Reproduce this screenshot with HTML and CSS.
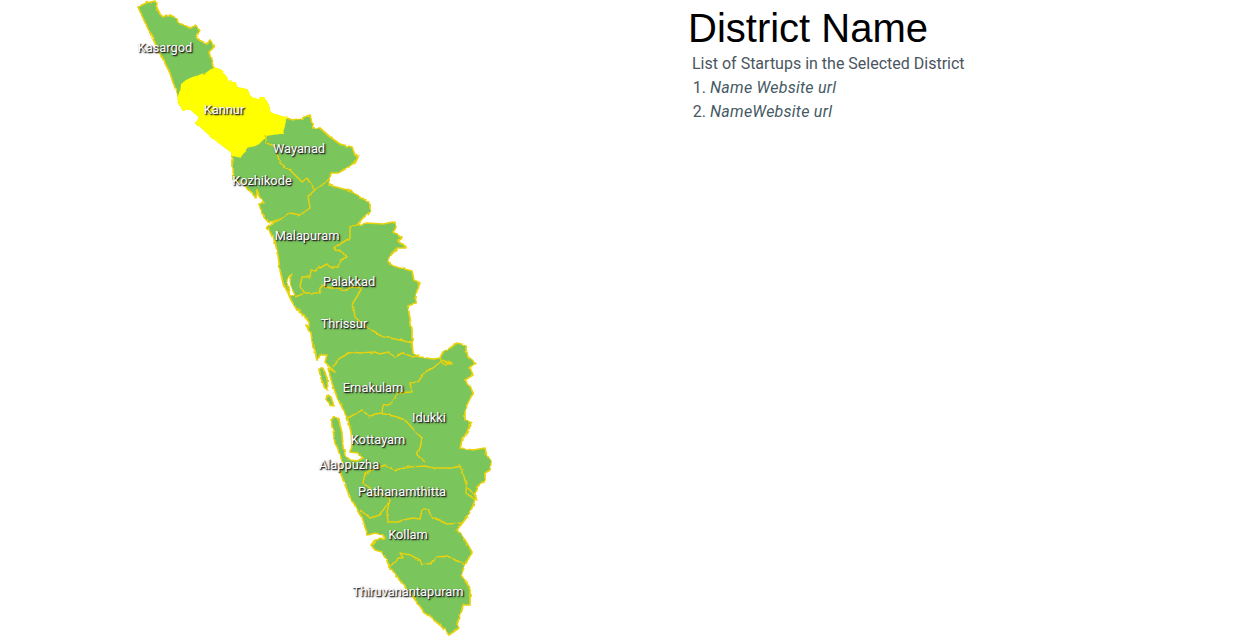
FILE: index.html
```html
<!DOCTYPE html>
<html lang="en">
<head>
<meta charset="utf-8">
<title>Kerala Startups</title>
<link rel="stylesheet" href="styles.css">
</head>
<body>
<div class="page">
  <div class="map">
    <svg class="map-svg" viewBox="0 0 625 641" width="625" height="641" aria-label="Map of Kerala">
      <defs>
        <filter id="rough" x="0" y="0" width="100%" height="100%" filterUnits="userSpaceOnUse" primitiveUnits="userSpaceOnUse">
          <feTurbulence type="fractalNoise" baseFrequency="0.14" numOctaves="2" seed="4" result="n"/>
          <feDisplacementMap in="SourceGraphic" in2="n" scale="3" xChannelSelector="R" yChannelSelector="G" result="d"/>
          <feGaussianBlur in="d" stdDeviation="0.3"/>
        </filter>
      </defs>
      <g class="rough">
      <path class="land" d="M138 7 L146 3 L155 1 L157 8 L160 14 L163 17 L167 15 L170 15 L174 17 L177 18 L178 23 L184 25 L188 27 L191 28 L195 25 L200 31 L196 37 L201 41 L207 44 L210 40 L214 47 L209 52 L211 60 L214 68 L220 70 L226 75 L227 82 L235 83 L237 88 L247 90 L250 97 L258 100 L264 98 L268 105 L270 113 L285 118 L293 120 L302 118 L310 115 L313 128 L320 128 L330 137 L340 144 L352 147 L355 155 L358 157 L355 163 L347 168 L338 173 L331 173 L329 185 L347 190 L357 195 L370 203 L370 212 L363 218 L357 225 L367 223 L383 224 L393 222 L396 227 L393 232 L402 238 L398 241 L406 248 L397 248 L390 255 L387 262 L393 266 L412 271 L414 280 L420 283 L417 290 L415 303 L408 305 L409 313 L412 330 L412 343 L413 353 L420 357 L433 359 L440 358 L443 352 L450 348 L457 343 L465 345 L468 357 L476 363 L470 368 L473 375 L465 380 L470 386 L473 393 L468 402 L465 410 L465 420 L472 423 L467 432 L462 440 L460 448 L473 450 L485 448 L487 457 L491 462 L490 470 L485 473 L485 480 L477 487 L475 500 L472 508 L467 517 L457 530 L465 540 L472 552 L465 565 L461 575 L470 588 L470 605 L463 605 L460 617 L457 623 L459 628 L449 635 L440 625 L425 613 L413 597 L401 582 L390 567 L382 552 L375 550 L371 545 L375 540 L385 539 L383 535 L375 533 L368 535 L365 527 L362 517 L356 507 L350 497 L343 480 L340 470 L343 463 L338 450 L335 443 L333 430 L331 420 L335 417 L339 420 L342 433 L343 447 L345 455 L350 460 L357 461 L363 458 L358 453 L350 452 L352 445 L351 432 L348 420 L342 407 L337 397 L332 383 L328 368 L335 372 L325 362 L327 355 L320 355 L317 361 L315 350 L313 347 L311 333 L306 325 L310 327 L309 322 L302 314 L297 310 L290 298 L288 293 L283 283 L280 270 L278 255 L275 242 L270 232 L267 227 L275 221 L268 222 L262 213 L259 204 L264 203 L260 197 L257 190 L256 198 L243 183 L233 180 L232 168 L232 152 L220 143 L207 132 L197 123 L200 117 L190 108 L183 110 L178 98 L170 73 L162 57 L152 37 L143 18 Z"/>
      <path class="land" d="M319 368 L323 368 L327 378 L328 390 L325 388 L321 378 Z"/>
      <path class="land" d="M327 395 L331 397 L334 406 L330 405 L326 400 Z"/>
      <path class="water" d="M292 274 L287 280 L288 287 L290 296 L295 295 L291 287 L290 281 Z"/>
      <path class="kannur" d="M178 98 L181 90 L182 83 L192 78 L207 73 L214 68 L220 70 L226 75 L227 82 L235 83 L237 88 L247 90 L250 97 L258 100 L264 98 L268 105 L270 113 L285 118 L285 123 L282 133 L267 135 L257 145 L247 147 L240 157 L232 155 L232 152 L220 143 L207 132 L197 123 L200 117 L190 108 L183 110 Z"/>
      <path class="border" d="M265 135 L267 143 L275 147 L280 163 L290 170 L296 176 L302 182 L307 178 L315 190 L322 185 L330 178"/>
      <path class="border" d="M315 190 L308 196 L310 208 L300 215 L290 213 L283 218 L275 222"/>
      <path class="border" d="M356 225 L350 227 L350 238 L335 247 L335 250 L343 252 L347 257 L340 260 L338 267 L330 267 L327 264 L320 268 L318 266 L316 271 L311 270 L310 277 L302 277 L300 287 L305 293 L295 297"/>
      <path class="border" d="M305 293 L320 293 L322 285 L330 288 L337 288 L345 290 L352 287 L362 288 L353 303 L355 317 L367 328 L383 337 L400 340 L412 343"/>
      <path class="border" d="M333 367 L337 362 L340 358 L352 352 L360 353 L375 352 L380 354 L388 352 L395 357 L403 353 L413 357 L420 355"/>
      <path class="border" d="M440 358 L443 364 L452 364 L443 360 L433 368 L425 372 L418 382 L410 383 L412 392 L397 393 L392 403 L383 405 L382 413"/>
      <path class="border" d="M348 418 L355 414 L362 410 L370 417 L375 414 L382 413 L388 415 L398 417 L407 422 L415 431 L422 438 L420 448 L417 455 L425 462"/>
      <path class="border" d="M365 473 L372 470 L385 465 L395 470 L410 467 L425 466 L433 468 L453 468 L460 466 L463 473 L467 487 L475 495 L477 501"/>
      <path class="border" d="M467 480 L466 493 L475 500"/>
      <path class="border" d="M365 473 L363 483 L370 488 L372 495 L383 493 L390 500 L380 515 L370 518 L360 510"/>
      <path class="border" d="M390 500 L387 512 L388 522 L398 522 L403 520 L413 518 L420 519 L422 510 L428 510 L432 517 L443 522 L447 524 L462 523 L467 517"/>
      <path class="border" d="M390 567 L398 558 L403 558 L400 553 L410 555 L420 560 L422 565 L432 563 L437 557 L447 556 L465 565"/>
      </g>
    </svg>
    <span class="label label-kasargod">Kasargod</span>
    <span class="label label-kannur">Kannur</span>
    <span class="label label-wayanad">Wayanad</span>
    <span class="label label-kozhikode">Kozhikode</span>
    <span class="label label-malapuram">Malapuram</span>
    <span class="label label-palakkad">Palakkad</span>
    <span class="label label-thrissur">Thrissur</span>
    <span class="label label-ernakulam">Ernakulam</span>
    <span class="label label-idukki">Idukki</span>
    <span class="label label-kottayam">Kottayam</span>
    <span class="label label-alappuzha">Alappuzha</span>
    <span class="label label-pathanamthitta">Pathanamthitta</span>
    <span class="label label-kollam">Kollam</span>
    <span class="label label-thiruvanantapuram">Thiruvanantapuram</span>
  </div>
  <main class="info">
    <h1 class="title">District Name</h1>
    <p class="intro">List of Startups in the Selected District</p>
    <ol class="startups">
      <li><em class="startup-name">Name Website url</em></li>
      <li><em class="startup-name">NameWebsite url</em></li>
    </ol>
  </main>
</div>
</body>
</html>
```
FILE: styles.css
```css
html, body {
  margin: 0;
  padding: 0;
  background: #fff;
  overflow: hidden;
}
.page {
  display: flex;
  width: 1249px;
  height: 641px;
  font-family: Roboto, sans-serif;
  font-size: 16px;
  line-height: 24px;
  color: #4a5560;
}
.map {
  position: relative;
  flex: 0 0 625px;
  height: 641px;
}
.map-svg {
  display: block;
}
.rough {
  filter: url(#rough);
}
.land {
  fill: #7ac55c;
  stroke: #e8d20f;
  stroke-width: 1.7;
  stroke-linejoin: round;
}
.water {
  fill: #fff;
  stroke: #e8d20f;
  stroke-width: 1.2;
  stroke-linejoin: round;
}
.kannur {
  fill: #ffff00;
  stroke: #ffff00;
  stroke-width: 1.7;
  stroke-linejoin: round;
}
.border {
  fill: none;
  stroke: #e8d20f;
  stroke-width: 1.5;
  stroke-linejoin: round;
}
.label {
  position: absolute;
  transform: translate(-50%, -50%);
  font-size: 12.8px;
  line-height: 16px;
  white-space: nowrap;
  color: #fff;
  text-shadow: 1px 1px 1px #222, 1px 1px 2px #333;
}
.label-kasargod { left: 165px; top: 48px; }
.label-kannur { left: 224px; top: 110px; }
.label-wayanad { left: 299px; top: 149px; }
.label-kozhikode { left: 262px; top: 181px; }
.label-malapuram { left: 307px; top: 236px; }
.label-palakkad { left: 349px; top: 282px; }
.label-thrissur { left: 344px; top: 324px; }
.label-ernakulam { left: 373px; top: 388px; }
.label-idukki { left: 429px; top: 418px; }
.label-kottayam { left: 378px; top: 440px; }
.label-alappuzha { left: 349px; top: 465px; }
.label-pathanamthitta { left: 402px; top: 492px; }
.label-kollam { left: 408px; top: 535px; }
.label-thiruvanantapuram { left: 408px; top: 592px; }
.info {
  flex: 1;
  padding: 5px 0 0 63px;
}
.title {
  margin: 0;
  font-family: "Liberation Sans", Arial, sans-serif;
  font-size: 40px;
  font-weight: 400;
  line-height: 47px;
  color: #000;
}
.intro {
  margin: 0 0 0 4px;
}
.startups {
  margin: 0;
  padding: 0 0 0 22px;
}
.startup-name {
  letter-spacing: 0.25px;
  color: #455a64;
}
```
